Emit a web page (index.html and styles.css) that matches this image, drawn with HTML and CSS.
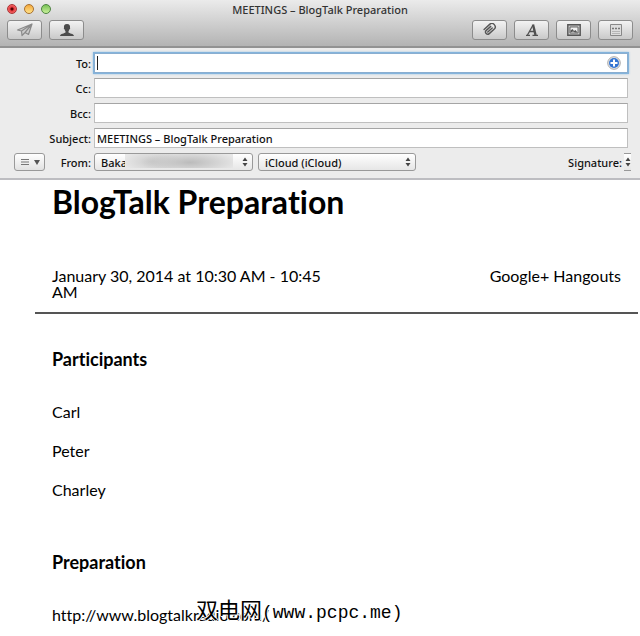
FILE: index.html
```html
<!DOCTYPE html>
<html lang="en">
<head>
<meta charset="utf-8">
<meta name="viewport" content="width=device-width, initial-scale=1">
<title>MEETINGS – BlogTalk Preparation</title>
<link rel="stylesheet" href="styles.css">
</head>
<body>
<header class="titlebar">
  <div class="title-row">
    <div class="lights">
      <button class="light red" aria-label="Close"></button>
      <button class="light amber" aria-label="Minimize"></button>
      <button class="light green" aria-label="Zoom"></button>
    </div>
    <div class="title">MEETINGS – BlogTalk Preparation</div>
  </div>
  <div class="tools">
    <button class="tool" aria-label="Send">
      <svg width="18" height="14" viewBox="0 0 18 14"><path d="M1.500 7 16 1 12.500 11.500 9 9.500 6 12.500 5.500 8ZM5.500 8 16 1 9 9.500" fill="#ccc" stroke="#8a8a8a" stroke-width="1.200" stroke-linejoin="round"/></svg>
    </button>
    <button class="tool" aria-label="Contacts">
      <svg width="16" height="14" viewBox="0 0 16 14"><path d="M8 1C5.500 1 4.700 2.500 5 4.700c-.4.6 0 1.400.5 1.600.3 1 .7 1.500 1 1.900v1.300C5.800 10.500 1.300 10.500 1 13h14c-.3-2.500-4.800-2.500-5.500-3.500V8.200c.3-.4.7-.9 1-1.900.5-.2.9-1 .5-1.600C11.300 2.500 10.500 1 8 1Z" fill="#4c4c4c"/></svg>
    </button>
    <span class="spacer"></span>
    <button class="tool" aria-label="Attach">
      <svg width="16" height="14" viewBox="0 0 16 14"><g transform="rotate(-42 8 7)" fill="none" stroke="#555" stroke-width="1.400" stroke-linecap="round"><path d="M11 4.800H5a2.200 2.200 0 0 0 0 4.400h6.500a3.300 3.300 0 0 0 0-6.600H4M5 7h6"/></g></svg>
    </button>
    <button class="tool" aria-label="Fonts">
      <svg width="14" height="14" viewBox="0 0 14 14" fill="none" stroke="#505050"><path d="M2.500 12 8 2" stroke-width="1.300"/><path d="M8 1.500 10.500 12" stroke-width="2.400"/><path d="M4.500 8.500H9.500M1 12.300H5M7.500 12.300H13" stroke-width="1.300"/></svg>
    </button>
    <button class="tool" aria-label="Photos">
      <svg width="14" height="12" viewBox="0 0 14 12"><path d="M.8.8h12.400v10.400H.8Z" fill="#c4c4c4" stroke="#555" stroke-width="1.400"/><path d="M3 3h8v6H3Z" fill="#f0f0f0" stroke="#666"/><path d="M3.500 8.500V6.500L5.500 5 7 7 8.500 6 10.500 8.500H8L6 7.500Z" fill="#555"/></svg>
    </button>
    <button class="tool" aria-label="Stationery">
      <svg width="12" height="12" viewBox="0 0 12 12"><path d="M.5.5h11v11H.5Z" fill="#ddd" stroke="#888"/><path d="M2 4.500h8" stroke="#777" stroke-width="1.500" stroke-dasharray="2 1"/><path d="M2 7.500h8M2 9.500h8" stroke="#b5b5b5"/></svg>
    </button>
  </div>
</header>

<form class="fields">
  <div class="row">
    <label for="to">To:</label>
    <div class="to-box">
      <input class="text focus" id="to" type="text">
      <span class="caret"></span>
      <button type="button" class="add" aria-label="Add recipient">
        <svg width="14" height="14" viewBox="0 0 14 14"><circle cx="7" cy="7" r="6.300" fill="#e9e9e9" stroke="#aaa"/><circle cx="7" cy="7" r="5" fill="#3475d2"/><path d="M7 3.500v7M3.500 7h7" stroke="#fff" stroke-width="2"/></svg>
      </button>
    </div>
  </div>
  <div class="row"><label for="cc">Cc:</label><input class="text" id="cc" type="text"></div>
  <div class="row"><label for="bcc">Bcc:</label><input class="text" id="bcc" type="text"></div>
  <div class="row"><label for="subject">Subject:</label><input class="text" id="subject" type="text" value="MEETINGS – BlogTalk Preparation"></div>
  <div class="from-row">
    <div class="from-label">
      <button type="button" class="options" aria-label="Header options">
        <svg width="22" height="10" viewBox="0 0 22 10"><path d="M2 2.500h8M2 5h8M2 7.500h8" stroke="#777" stroke-width="1.200"/><path d="M15 3h6l-3 5Z" fill="#555"/></svg>
      </button>
      <label for="from">From:</label>
    </div>
    <div class="pop sender">
      <select id="from"><option>Baka</option></select>
      <span class="redaction"></span>
      <svg class="arrows" width="6" height="10" viewBox="0 0 6 10"><path d="M.5 4 3 .5 5.500 4ZM.5 6 3 9.500 5.500 6Z" fill="#444"/></svg>
    </div>
    <div class="pop server">
      <select aria-label="Mail server"><option>iCloud (iCloud)</option></select>
      <svg class="arrows" width="6" height="10" viewBox="0 0 6 10"><path d="M.5 4 3 .5 5.500 4ZM.5 6 3 9.500 5.500 6Z" fill="#444"/></svg>
    </div>
    <label class="signature" for="signature">Signature:</label>
    <div class="pop tiny">
      <select id="signature"><option></option></select>
      <svg class="arrows" width="6" height="10" viewBox="0 0 6 10"><path d="M.5 4 3 .5 5.500 4ZM.5 6 3 9.500 5.500 6Z" fill="#444"/></svg>
    </div>
  </div>
</form>

<main class="message">
  <h1>BlogTalk Preparation</h1>
  <div class="meta">
    <p class="when">January 30, 2014 at 10:30 AM - 10:45 AM</p>
    <p>Google+ Hangouts</p>
  </div>
  <h2>Participants</h2>
  <p class="person">Carl</p>
  <p class="person">Peter</p>
  <p class="person">Charley</p>
  <h2 class="prep">Preparation</h2>
  <p class="link">http://www.blogtalkradio.com/<span class="mark"><span class="han">双电网</span>(www.pcpc.me)</span></p>
</main>
</body>
</html>
```
FILE: styles.css
```css
* {
  box-sizing: border-box;
}

body {
  margin: 0;
  background: #fff;
  color: #111;
  font-family: "Noto Sans", "Open Sans", sans-serif;
  font-size: 11px;
  font-weight: 500;
}

button,
input,
select {
  margin: 0;
  font: inherit;
  color: inherit;
}

button {
  display: flex;
  align-items: center;
  justify-content: center;
  padding: 0;
}

.titlebar {
  height: 48px;
  background: linear-gradient(#ebebeb, #d2d2d2 45%, #b3b3b3);
  border-bottom: 2px solid #929292;
}

.title-row {
  position: relative;
  height: 20px;
}

.lights {
  position: absolute;
  top: 4px;
  left: 7px;
  display: flex;
  gap: 7px;
}

.light {
  width: 10px;
  height: 10px;
  border: 1px solid #777;
  border-radius: 50%;
}

.red {
  background: radial-gradient(circle at 50% 50%, #500 0 1px, #e23b3f 2px, #f77 5px);
  border-color: #a33;
}

.amber {
  background: linear-gradient(#f4a83c, #ffe38a);
  border-color: #a9702c;
}

.green {
  background: linear-gradient(#79c257, #c9f09b);
  border-color: #4d8440;
}

.title {
  text-align: center;
  line-height: 19px;
  color: #333;
}

.tools {
  display: flex;
  gap: 7px;
  padding: 0 7px;
}

.spacer {
  flex: 1;
}

.tool {
  width: 35px;
  height: 20px;
  border: 1px solid #8c8c8c;
  border-radius: 3px;
  background: linear-gradient(#f3f3f3, #c9c9c9);
}

.fields {
  display: grid;
  gap: 5px;
  padding: 5px 12px 7px 0;
  background: #ececec;
  border-bottom: 2px solid #bdbdc1;
}

.row {
  display: grid;
  grid-template-columns: 91px 1fr;
  column-gap: 3px;
  align-items: center;
  text-align: right;
}

.text {
  display: block;
  width: 100%;
  height: 20px;
  padding: 0 2px;
  border: 1px solid #bfbfbf;
  border-top-color: #a5a5a5;
  border-radius: 0;
  background: #fff;
  outline: 0;
}

.to-box {
  position: relative;
}

.focus {
  border-color: #8aaed0;
  box-shadow: 0 0 0 1px #84b4dc, 0 0 2px 1px #9cc3e4;
}

.caret {
  position: absolute;
  top: 3px;
  left: 3px;
  width: 1px;
  height: 14px;
  background: #222;
}

.add {
  position: absolute;
  top: 3px;
  right: 7px;
  border: 0;
  background: none;
}

.from-row {
  display: flex;
  align-items: center;
}

.from-label {
  display: flex;
  align-items: center;
  justify-content: space-between;
  width: 94px;
  padding: 0 3px 0 14px;
}

.options {
  width: 31px;
  height: 18px;
  border: 1px solid #999;
  border-radius: 3px;
  background: linear-gradient(#fff, #e2e2e2);
}

.pop {
  position: relative;
}

.pop select {
  display: block;
  width: 100%;
  height: 18px;
  padding: 0 6px;
  appearance: none;
  border: 1px solid #999;
  border-radius: 3px;
  background: linear-gradient(#fff, #e6e6e6);
}

.arrows {
  position: absolute;
  top: 4px;
  right: 5px;
  pointer-events: none;
}

.sender {
  flex: 0 1 159px;
}

.server {
  flex: 0 1 158px;
  margin-left: 5px;
}

.redaction {
  position: absolute;
  top: 1px;
  left: 31px;
  right: 20px;
  height: 14px;
  background: radial-gradient(ellipse 50px 12px at 60% 60%, #bbb, transparent), radial-gradient(ellipse 30px 12px at 25% 55%, #ccc, transparent), #e8e8e8;
  pointer-events: none;
}

.signature {
  margin-left: auto;
}

.tiny {
  width: 7px;
  margin: 0 -3px 0 2px;
}

.pop.tiny select {
  padding: 0;
  border-width: 1px 0;
  border-radius: 0;
}

.tiny .arrows {
  right: 0;
}

.message {
  padding: 3px 2px 8px 35px;
  font-family: Lato, sans-serif;
  font-size: 16px;
  font-weight: 400;
  line-height: 16px;
  font-variant-ligatures: none;
  color: #000;
}

h1,
h2,
p {
  margin: 0;
}

h1,
h2,
.person,
.link {
  padding-left: 17px;
}

h1 {
  font-size: 32px;
  line-height: 38px;
}

h2 {
  padding-top: 33px;
  font-size: 18px;
  line-height: 24px;
}

.meta {
  display: flex;
  justify-content: space-between;
  padding: 47px 17px 12px;
  border-bottom: 2px solid #555;
}

.when {
  width: 274px;
}

.person {
  margin-top: 23px;
}

.person:nth-of-type(1) {
  margin-top: 33px;
}

.prep {
  padding-top: 52px;
}

.link {
  position: relative;
  margin-top: 33px;
}

.mark {
  position: absolute;
  left: 161px;
  top: -5px;
  font: 18px/22px "Liberation Mono", "Noto Sans CJK SC", monospace;
  white-space: nowrap;
  text-shadow: 1px 0 #fff, -1px 0 #fff, 0 1px #fff, 0 -1px #fff;
}

.han {
  font-size: 22px;
}
```
